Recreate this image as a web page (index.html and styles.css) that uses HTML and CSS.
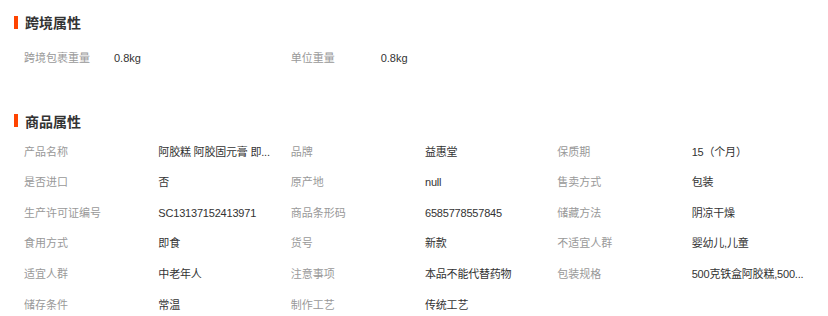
FILE: index.html
```html
<!DOCTYPE html>
<html lang="zh-CN">
<head>
<meta charset="utf-8">
<title>商品属性</title>
<link rel="stylesheet" href="styles.css">
</head>
<body>
<section class="section section-cross">
  <h2 class="section-title"><span class="bar"></span>跨境属性</h2>
  <div class="grid grid-3">
    <div class="label">跨境包裹重量</div><div class="value">0.8kg</div>
    <div class="label">单位重量</div><div class="value">0.8kg</div>
  </div>
</section>
<section class="section section-goods">
  <h2 class="section-title"><span class="bar"></span>商品属性</h2>
  <div class="grid grid-6">
    <div class="label">产品名称</div><div class="value" title="阿胶糕 阿胶固元膏 即食阿胶糕">阿胶糕 阿胶固元膏 即...</div>
    <div class="label">品牌</div><div class="value">益惠堂</div>
    <div class="label">保质期</div><div class="value">15（个月）</div>

    <div class="label">是否进口</div><div class="value">否</div>
    <div class="label">原产地</div><div class="value">null</div>
    <div class="label">售卖方式</div><div class="value">包装</div>

    <div class="label">生产许可证编号</div><div class="value">SC13137152413971</div>
    <div class="label">商品条形码</div><div class="value">6585778557845</div>
    <div class="label">储藏方法</div><div class="value">阴凉干燥</div>

    <div class="label">食用方式</div><div class="value">即食</div>
    <div class="label">货号</div><div class="value">新款</div>
    <div class="label">不适宜人群</div><div class="value">婴幼儿,儿童</div>

    <div class="label">适宜人群</div><div class="value">中老年人</div>
    <div class="label">注意事项</div><div class="value">本品不能代替药物</div>
    <div class="label">包装规格</div><div class="value" title="500克铁盒阿胶糕,500克袋装阿胶糕">500克铁盒阿胶糕,500...</div>

    <div class="label">储存条件</div><div class="value">常温</div>
    <div class="label">制作工艺</div><div class="value">传统工艺</div>
  </div>
</section>
</body>
</html>
```
FILE: styles.css
```css
* { box-sizing: border-box; }
html, body {
  margin: 0;
  padding: 0;
  background: #fff;
}
body {
  font-family: "Liberation Sans", "Noto Sans CJK SC", sans-serif;
  font-size: 11px;
  color: #333;
  width: 828px;
  height: 316px;
  overflow: hidden;
}
.section {
  padding-left: 14px;
}
.section-cross {
  padding-top: 12px;
}
.section-goods {
  padding-top: 37px;
}
.section-title {
  display: flex;
  align-items: center;
  gap: 7px;
  height: 20px;
  margin: 0;
  font-size: 14px;
  font-weight: bold;
  color: #333;
}
.bar {
  display: block;
  width: 4px;
  height: 13px;
  background: #ff4400;
}
.grid {
  display: grid;
  margin-left: 10px;
  width: 800px;
}
.grid-3 {
  margin-top: 11px;
  grid-template-columns: 90px 176.67px 90px 176.67px 90px 176.67px;
}
.grid-6 {
  margin-top: 6px;
  grid-template-columns: repeat(6, 133.33px);
}
.label, .value {
  height: 30.6px;
  line-height: 30.6px;
  white-space: nowrap;
}
.label {
  color: #999;
}
.value {
  color: #333;
}
.grid-6 .value {
  padding-left: 1px;
  letter-spacing: -0.2px;
}
```
